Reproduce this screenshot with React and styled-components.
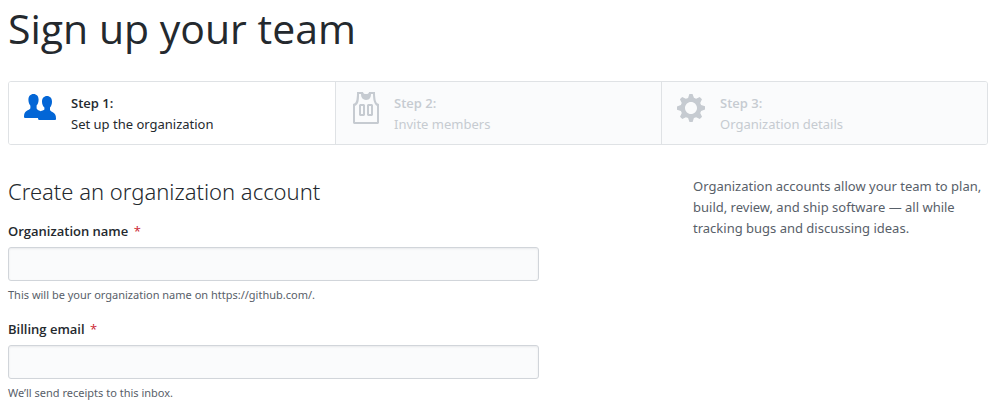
import React from "react";
import styled, { createGlobalStyle } from "styled-components";

const GlobalStyle = createGlobalStyle`
  * { box-sizing: border-box; }
  body {
    margin: 0;
    background: #fff;
    color: #24292e;
    font-family: "Noto Sans", "Open Sans", sans-serif;
    font-size: 13px;
    line-height: 21px;
  }
`;

const Page = styled.main`
  padding: 0 15px 8px 8px;
`;

const Title = styled.h1`
  margin: 0 0 25px;
  font-family: "Open Sans", sans-serif;
  font-size: 41px;
  font-weight: 400;
  line-height: 56px;
`;

const Steps = styled.ol`
  display: grid;
  grid-template-columns: repeat(3, 1fr);
  margin: 0 0 31px;
  padding: 0;
  list-style: none;
  border: 1px solid #dfe2e5;
  border-radius: 3px;
  overflow: hidden;
`;

const Step = styled.li`
  display: flex;
  gap: 15px;
  padding: 10px 15px 9px;
  color: ${(p) => (p.$current ? "#24292e" : "#c6cbd1")};
  background: ${(p) => (p.$current ? "#fff" : "#fafbfc")};

  & + & {
    border-left: 1px solid #dfe2e5;
  }
`;

const StepIcon = styled.svg`
  flex: none;
  height: 32px;
  width: ${(p) => p.$width}px;
  fill: ${(p) => (p.$current ? "#0366d6" : "currentColor")};
`;

const StepText = styled.div`
  display: flex;
  flex-direction: column;
  padding-top: 1px;
`;

const StepName = styled.strong`
  font-family: "Open Sans", sans-serif;
  font-weight: 600;
`;

const Columns = styled.div`
  display: flex;
  justify-content: space-between;
`;

const Form = styled.form`
  flex: 0 1 531px;
`;

const Heading = styled.h2`
  margin: 0 0 15px;
  font-weight: 300;
  font-size: 22px;
  line-height: 30px;
`;

const Field = styled.div`
  display: flex;
  flex-direction: column;
  margin-bottom: 15px;
`;

const Label = styled.label`
  margin-bottom: 5px;
  font-family: "Open Sans", sans-serif;
  font-weight: 600;
`;

const Required = styled.span`
  margin-left: 2px;
  color: #cb2431;
  font-weight: 400;
`;

const Input = styled.input`
  width: 100%;
  height: 34px;
  padding: 6px 8px;
  font: inherit;
  color: inherit;
  background: #fafbfc;
  border: 1px solid #d1d5da;
  border-radius: 3px;
  box-shadow: inset 0 1px 2px rgba(27, 31, 35, 0.075);
`;

const Note = styled.p`
  margin: 5px 0 0;
  color: #586069;
  font-size: 11px;
  line-height: 18px;
`;

const Aside = styled.p`
  flex: 0 0 295px;
  margin: 0;
  color: #586069;
`;

const ICONS = {
  people: {
    width: 32,
    d: "M9.5 2C12.6 2 14.6 4.200 14.600 7.700C14.600 10.200 13.700 12.300 12.600 13.600V16C12.600 17 13.400 17.800 15 18.400L16.800 19.200C17.800 18.800 19.800 18.400 20.400 17.600V15.600C19 14.200 18 12.200 18 9.700C18 6.200 20 4 23 4S28 6.200 28 9.700C28 12.200 27.200 14.200 26 15.600V18C26.500 19.200 28 19.800 29.500 20.700C31.300 21.800 32 23.500 32 26.700C32 27.700 31.500 28 30.500 28H15.500C14.500 28 14 27.500 14 26H1.500C.5 26 0 25.600 0 24.700C0 21.700 .7 20 2.500 18.900C4 18 6 17.500 6.400 16.200V13.700C5.300 12.300 4.400 10.200 4.400 7.700C4.400 4.200 6.500 2 9.500 2Z",
    viewBox: "0 0 32 32",
  },
  jersey: {
    width: 28,
    viewBox: "0 0 14 16",
    d: "M4.500 6l-.5.5v5l.5.5h2l.5-.5v-5L6.500 6h-2zM6 11H5V7h1v4zm6.270-7.250C12.050 2.370 11.960 1.120 12 0H9.020c0 .27-.13.48-.39.69-.25.2-.63.3-1.130.3-.5 0-.88-.09-1.130-.3-.23-.2-.36-.42-.36-.69H3c.05 1.130-.03 2.380-.25 3.750C2.550 5.130 1.950 5.880 1 6v9.500l.5.5h12l.5-.5V6c-.95-.13-1.530-.88-1.750-2.250h.02zM13 15H2V7c.89-.5 1.480-1.250 1.720-2.250S4.030 2.500 4 1h1c-.02.78.16 1.470.52 2.060.36.58 1.020.89 2 .94.98-.02 1.640-.33 2-.94.36-.59.5-1.280.48-2.060h1c.02 1.420.13 2.550.33 3.380.2.81.69 2 1.670 2.630v8V15zM8.500 6l-.5.5v5l.5.5h2l.5-.5v-5L10.500 6h-2zm1.500 5H9V7h1v4z",
  },
  gear: {
    width: 28,
    viewBox: "0 0 14 16",
    d: "M14 8.770v-1.600l-1.940-.64-.45-1.090.88-1.840-1.130-1.130-1.810.91-1.090-.45-.69-1.920h-1.600l-.63 1.940-1.110.45-1.840-.88-1.130 1.130.91 1.810-.45 1.090L0 7.230v1.590l1.940.64.45 1.090-.88 1.840 1.130 1.130 1.810-.91 1.090.45.69 1.920h1.590l.63-1.940 1.110-.45 1.840.88 1.130-1.130-.92-1.810.47-1.090L14 8.750v.02zM7 11c-1.660 0-3-1.340-3-3s1.340-3 3-3 3 1.340 3 3-1.340 3-3 3z",
  },
};

const STEPS = [
  { name: "Step 1:", text: "Set up the organization", icon: ICONS.people, current: true },
  { name: "Step 2:", text: "Invite members", icon: ICONS.jersey },
  { name: "Step 3:", text: "Organization details", icon: ICONS.gear },
];

function TextField({ id, type, label, note }) {
  return (
    <Field>
      <Label htmlFor={id}>
        {label} <Required>*</Required>
      </Label>
      <Input id={id} type={type} required aria-describedby={`${id}-note`} />
      <Note id={`${id}-note`}>{note}</Note>
    </Field>
  );
}

export default function App() {
  return (
    <>
      <GlobalStyle />
      <Page>
        <Title>Sign up your team</Title>
        <Steps>
          {STEPS.map(({ name, text, icon, current }) => (
            <Step key={name} $current={current} aria-current={current ? "step" : undefined}>
              <StepIcon $width={icon.width} $current={current} viewBox={icon.viewBox} aria-hidden="true">
                <path d={icon.d} fillRule="evenodd" />
              </StepIcon>
              <StepText>
                <StepName>{name}</StepName>
                <span>{text}</span>
              </StepText>
            </Step>
          ))}
        </Steps>
        <Columns>
          <Form>
            <Heading>Create an organization account</Heading>
            <TextField
              id="organization-name"
              type="text"
              label="Organization name"
              note="This will be your organization name on https://github.com/."
            />
            <TextField
              id="billing-email"
              type="email"
              label="Billing email"
              note="We’ll send receipts to this inbox."
            />
          </Form>
          <Aside>
            Organization accounts allow your team to plan, build, review, and ship software — all
            while tracking bugs and discussing ideas.
          </Aside>
        </Columns>
      </Page>
    </>
  );
}
